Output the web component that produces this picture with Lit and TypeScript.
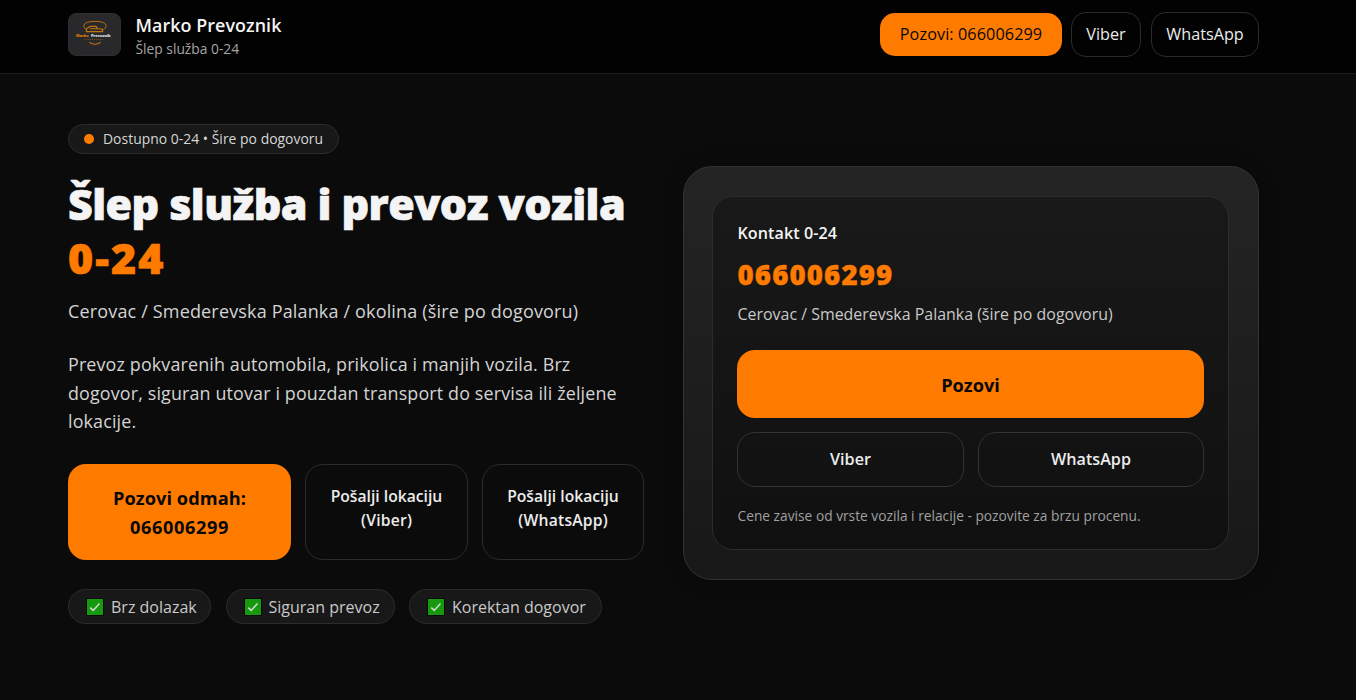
import { LitElement, html, css } from "lit";
import { customElement } from "lit/decorators.js";

const check = html`<svg class="check" viewBox="0 0 17 18" aria-hidden="true">
  <rect x="0.5" y="0.5" width="17" height="17" fill="#16990f" stroke="#070907" />
  <path d="M4.3 9.6 7.2 12.4 13.5 5.4" fill="none" stroke="#cfdccf" stroke-width="1.5" />
</svg>`;

@customElement("app-root")
export class AppRoot extends LitElement {
  static styles = css`
    :host { display: block; height: 700px; overflow: hidden; background: #0b0b0b; color: #f4f4f4; font-family: "Open Sans", "Noto Sans", sans-serif; }
    * { box-sizing: border-box; }
    h1, p { margin: 0; }
    a { color: inherit; text-decoration: none; }
    .t { white-space: nowrap; }
    header { height: 74px; padding: 12px 97px 16px 68px; display: flex; align-items: center; justify-content: space-between; background: #020202; border-bottom: 1px solid #1c1c1c; }
    .brand { display: flex; align-items: center; gap: 14.5px; }
    .logo { width: 53px; height: 43px; display: block; border-radius: 8px; background: #29292c; border: 1px solid #2e2e31; }
    .name { font-size: 17.9px; font-weight: 650; line-height: 26px; letter-spacing: 0.06px; }
    .tag { font-size: 13.8px; line-height: 20px; padding-top: 1px; margin-bottom: -1px; color: #a5a5a5; }
    nav { display: flex; align-items: center; gap: 10px; font-size: 16.2px; line-height: 24px; }
    nav .t { padding-bottom: 2px; }
    .call { height: 43px; width: 182px; margin-right: -1px; border-radius: 15px; background: #ff7b00; color: #080808; display: grid; place-items: center; letter-spacing: 0.1px; }
    .ghost { border: 1px solid #2b2b2b; border-radius: 18px; display: grid; place-items: center; color: #ececec; }
    nav .ghost { height: 45px; border-radius: 15px; }
    .nv { width: 70px; }
    .nw { width: 108px; }
    main { display: grid; grid-template-columns: 576px 576px; column-gap: 39px; padding: 50px 97px 0 68px; align-items: start; }
    .badge { width: 271px; height: 30px; border: 1px solid #2c2c2c; border-radius: 15px; background: #181818; display: flex; align-items: center; gap: 9px; padding-left: 15px; font-size: 13.9px; letter-spacing: 0.03px; color: #d6d6d6; }
    .badge .t { padding-bottom: 2px; }
    .dot { width: 10px; height: 10px; border-radius: 50%; background: #ff7b00; }
    h1 { margin-top: 23px; font-size: 43px; line-height: 53.5px; font-weight: 800; letter-spacing: -0.58px; -webkit-text-stroke: 0.7px currentColor; }
    .accent { color: #ff7b00; }
    h1 .accent { letter-spacing: 2.1px; }
    .sub { margin-top: 13px; font-size: 18px; letter-spacing: 0.16px; line-height: 28px; color: #d4d4d4; }
    .text { margin-top: 25px; font-size: 17.9px; letter-spacing: 0.14px; line-height: 28.5px; color: #d4d4d4; }
    .actions { margin-top: 28.5px; display: grid; grid-template-columns: 223px 163px 162px; gap: 14px; height: 96px; }
    .big { background: #ff7b00; color: #080808; border-radius: 18px; text-align: center; font-weight: 700; font-size: 18.2px; line-height: 29px; padding-top: 19.5px; letter-spacing: 0.08px; }
    .big .digits { letter-spacing: 0.6px; }
    .actions .ghost { display: block; text-align: center; font-weight: 600; font-size: 15.7px; line-height: 24px; padding-top: 19px; }
    .actions .app { letter-spacing: 0.2px; margin-right: -0.3px; }
    .chips { margin-top: 29px; display: flex; gap: 14.5px; }
    .chip { height: 35px; border: 1px solid #2c2c2c; border-radius: 18px; background: #181818; display: flex; align-items: center; gap: 8px; padding-left: 17px; font-size: 16px; color: #c9c9c9; }
    .c1 { width: 143px; }
    .c2 { width: 169px; }
    .c3 { width: 193px; }
    .check { width: 17px; height: 18px; flex: none; overflow: visible; }
    .card { margin-top: 42px; height: 414px; border-radius: 29px; border: 1px solid #333; background: linear-gradient(#242424, #181818); padding: 29px 29px 29px 28px; box-shadow: 0 0 20px rgba(0, 0, 0, 0.25); }
    .inner { height: 354px; border: 1px solid #2c2c2c; border-radius: 21px; background: linear-gradient(#191919, #101010); padding: 24px; }
    .inner p .t { margin-left: 0.5px; }
    .k { font-size: 16.1px; font-weight: 600; line-height: 24px; letter-spacing: 0.08px; }
    .num { font-size: 27.6px; font-weight: 800; line-height: 36px; margin-top: 11px; letter-spacing: 1.15px; -webkit-text-stroke: 0.4px currentColor; }
    .loc { font-size: 15.95px; line-height: 24px; margin-top: 10px; color: #c9c9c9; }
    .wide { height: 68px; margin-top: 24px; padding-top: 2px; border-radius: 18px; background: #ff7b00; color: #080808; display: grid; place-items: center; font-weight: 700; font-size: 18.2px; }
    .pair { display: grid; grid-template-columns: 227px 226px; gap: 14px; margin-top: 14px; height: 55px; font-weight: 600; font-size: 16.15px; }
    .pair .ghost { border-color: #333; padding-bottom: 2px; }
    .note { margin-top: 19px; font-size: 13.75px; line-height: 20px; color: #a0a0a0; }
  `;

  render() {
    return html`
      <header>
        <div class="brand">
          <svg class="logo" viewBox="0 0 53 43" aria-hidden="true">
            <g fill="none" stroke="#c8740f">
              <path d="M15.5 13C13 6 41 6 38.5 13C38 15 37 16 36 16.5M15.5 13C16 15 17 16 18 16.5" stroke-width="1" />
              <path d="M18 18.5v-3l4-2.5h6l2 2.5 5 .5v2.5zM22 15.5h8M20 18.5h13" stroke-width="1.2" />
              <path d="M21 29.5q6 4.5 12 0" stroke-width="1.1" />
              <path d="M16 26.7h20" stroke-width=".6" stroke-dasharray="1 1" />
            </g>
            <text x="20.5" y="24.6" font-size="4" font-weight="800" fill="#e07c08" text-anchor="end">Marko</text>
            <text x="22.8" y="24.6" font-size="4" font-weight="800" fill="#e8e8e8">Prevoznik</text>
          </svg>
          <div>
            <div class="name"><span class="t">Marko Prevoznik</span></div>
            <div class="tag"><span class="t">Šlep služba 0-24</span></div>
          </div>
        </div>
        <nav>
          <a class="call"><span class="t">Pozovi: 066006299</span></a>
          <a class="ghost nv"><span class="t">Viber</span></a>
          <a class="ghost nw"><span class="t">WhatsApp</span></a>
        </nav>
      </header>
      <main>
        <section>
          <div class="badge"><i class="dot"></i><span class="t">Dostupno 0-24 • Šire po dogovoru</span></div>
          <h1><span class="t">Šlep služba i prevoz vozila</span><br /><span class="t accent">0-24</span></h1>
          <p class="sub"><span class="t">Cerovac / Smederevska Palanka / okolina (šire po dogovoru)</span></p>
          <p class="text">
            <span class="t">Prevoz pokvarenih automobila, prikolica i manjih vozila. Brz</span><br />
            <span class="t">dogovor, siguran utovar i pouzdan transport do servisa ili željene</span><br />
            <span class="t">lokacije.</span>
          </p>
          <div class="actions">
            <a class="big"><span class="t">Pozovi odmah:</span><br /><span class="t digits">066006299</span></a>
            <a class="ghost"><span class="t">Pošalji lokaciju</span><br /><span class="t app">(Viber)</span></a>
            <a class="ghost"><span class="t">Pošalji lokaciju</span><br /><span class="t app">(WhatsApp)</span></a>
          </div>
          <div class="chips">
            <div class="chip c1">${check}<span class="t">Brz dolazak</span></div>
            <div class="chip c2">${check}<span class="t">Siguran prevoz</span></div>
            <div class="chip c3">${check}<span class="t">Korektan dogovor</span></div>
          </div>
        </section>
        <aside class="card">
          <div class="inner">
            <p class="k"><span class="t">Kontakt 0-24</span></p>
            <p class="num accent"><span class="t">066006299</span></p>
            <p class="loc"><span class="t">Cerovac / Smederevska Palanka (šire po dogovoru)</span></p>
            <a class="wide"><span class="t">Pozovi</span></a>
            <div class="pair">
              <a class="ghost"><span class="t">Viber</span></a>
              <a class="ghost"><span class="t">WhatsApp</span></a>
            </div>
            <p class="note"><span class="t">Cene zavise od vrste vozila i relacije - pozovite za brzu procenu.</span></p>
          </div>
        </aside>
      </main>
    `;
  }
}
